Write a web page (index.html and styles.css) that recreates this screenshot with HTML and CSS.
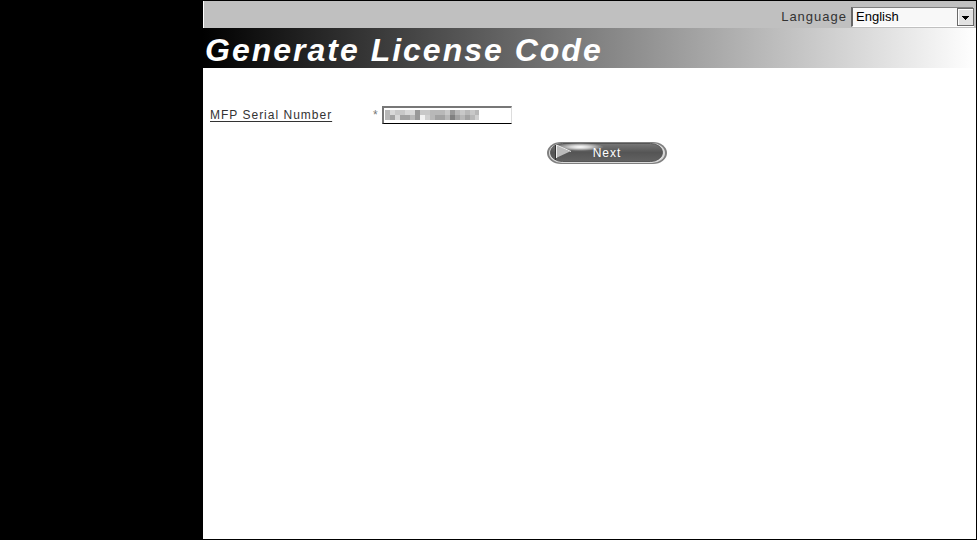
FILE: index.html
```html
<!DOCTYPE html>
<html lang="en">
<head>
  <meta charset="UTF-8">
  <meta name="viewport" content="width=device-width, initial-scale=1.0">
  <title>Generate License Code</title>
  <link rel="stylesheet" href="styles.css">
</head>
<body>
  <div class="page">
    <div class="sidebar"></div>

    <main class="content">
      <div class="top-bar">
        <label for="language">Language</label>
        <div class="select-box">
          <select id="language">
            <option selected>English</option>
          </select>
          <svg class="arrow" width="17" height="18" viewBox="0 0 17 18" shape-rendering="crispEdges" aria-hidden="true">
            <rect width="17" height="18" fill="#6a6a6a"/>
            <rect x="1" y="1" width="15" height="16" fill="#fff"/>
            <rect x="2" y="2" width="14" height="15" fill="#e2e2e2"/>
            <path d="M5 8h7v1h-1v1h-1v1h-1v1h-1v-1h-1v-1h-1v-1h-1z" fill="#000"/>
          </svg>
        </div>
      </div>

      <h1 class="title">Generate License Code</h1>

      <form class="license-form">
        <div class="row">
          <label class="serial-label" for="serial">MFP Serial Number</label>
          <span class="required">*</span>
          <div class="serial-box">
            <input type="text" id="serial">
            <!-- masked serial number -->
            <svg class="mask" width="94" height="10" viewBox="0 0 94 10" shape-rendering="crispEdges" aria-hidden="true">
              <rect width="94" height="10" fill="#b8b8b8"/>
              <path d="M5 0h5v5h-5zM20 0h10v5h-10zM10 5h5v5h-5z" fill="#d8d8d8"/>
              <path d="M10 0h10v5h-10zM35 0h10v5h-10zM60 0h5v5h-5zM75 0h5v5h-5zM85 0h5v5h-5z" fill="#c8c8c8"/>
              <path d="M35 5h5v5h-5z" fill="#f2f2f2"/>
              <path d="M40 5h5v5h-5zM90 5h4v5h-4z" fill="#d0d0d0"/>
              <path d="M5 5h5v5h-5zM15 5h10v5h-10zM50 5h10v5h-10zM70 5h5v5h-5zM80 5h5v5h-5z" fill="#a2a2a2"/>
              <path d="M30 0h5v10h-5zM65 0h5v5h-5z" fill="#989898"/>
              <path d="M65 5h5v5h-5z" fill="#808080"/>
            </svg>
          </div>
        </div>

        <button type="button" class="next">
          <svg class="next-bg" width="120" height="22" viewBox="0 0 120 22" aria-hidden="true">
            <defs>
              <linearGradient id="face" x1="0" y1="0" x2="0" y2="1">
                <stop offset="0" stop-color="#777"/>
                <stop offset="0.5" stop-color="#555"/>
                <stop offset="1" stop-color="#626262"/>
              </linearGradient>
              <radialGradient id="shine">
                <stop offset="0" stop-color="#fff"/>
                <stop offset="0.4" stop-color="#fff" stop-opacity="0.7"/>
                <stop offset="1" stop-color="#fff" stop-opacity="0"/>
              </radialGradient>
            </defs>
            <rect width="120" height="22" rx="14" ry="11" fill="#808080"/>
            <rect x="2" y="1" width="116" height="20" rx="13" ry="10" fill="#d8d8d8"/>
            <rect x="3.500" y="1.500" width="112" height="18" rx="12" ry="9" fill="url(#face)" stroke="#555"/>
            <ellipse cx="33" cy="5" rx="24" ry="4" fill="url(#shine)"/>
            <path d="M8.500 3v15" stroke="#333"/>
            <path d="M9 3L23 9.500L9 16Z" fill="#bbb"/>
            <path d="M9.500 16V3L24 9.500" fill="none" stroke="#eee"/>
          </svg>
          <span class="next-text">Next</span>
        </button>
      </form>
    </main>
  </div>
</body>
</html>
```
FILE: styles.css
```css
* {
  box-sizing: border-box;
}

body {
  margin: 0;
  font-family: 'Liberation Sans', Arial, sans-serif;
  font-size: 12px;
  line-height: 16px;
  letter-spacing: 1px;
  background-color: #fff;
  color: #333;
}

.page {
  display: flex;
  min-height: 100vh;
  border: 1px solid #000;
}

.sidebar {
  flex: 0 0 202px;
  background-color: #000;
}

.content {
  flex: 1;
}

.top-bar {
  display: flex;
  justify-content: flex-end;
  align-items: center;
  gap: 4px;
  height: 27px;
  padding: 5px 2px 0 0;
  border-left: 1px solid #fff;
  background-color: #c0c0c0;
  font-size: 13px;
}

.select-box {
  position: relative;
  width: 123px;
  height: 20px;
}

select {
  appearance: none;
  width: 100%;
  height: 100%;
  padding: 0 20px 0 3px;
  border: 1px solid #808080;
  border-left: 2px solid #666;
  border-bottom-color: #fff;
  border-right-color: #fff;
  border-radius: 0;
  background-color: #f8f8f8;
  font: inherit;
  letter-spacing: 0;
  color: #000;
}

.arrow {
  position: absolute;
  top: 1px;
  right: 0;
  pointer-events: none;
}

.title {
  margin: 0;
  padding: 4px 2px 0;
  background: linear-gradient(to right, #000, #fff);
  color: #fff;
  font-size: 32px;
  font-style: italic;
  line-height: 36px;
  letter-spacing: 2px;
}

.license-form {
  padding: 38px 7px;
}

.row {
  display: flex;
  align-items: center;
}

.serial-label {
  width: 163px;
  line-height: 18px;
  text-decoration: underline;
  text-underline-offset: 2px;
}

.required {
  width: 9px;
  color: #777;
}

.serial-box {
  position: relative;
  height: 18px;
}

.serial-box input {
  display: block;
  width: 130px;
  height: 18px;
  padding: 0 2px;
  border: solid;
  border-width: 2px 1px 1px 2px;
  border-color: #777 #ddd #000 #777;
  background-color: #fff;
  font: inherit;
}

.mask {
  position: absolute;
  top: 4px;
  left: 3px;
}

.next {
  display: block;
  position: relative;
  width: 120px;
  height: 22px;
  margin: 18px auto 0 337px;
  padding: 0;
  border: 0;
  background: none;
  font: inherit;
  letter-spacing: 1px;
  color: #fff;
}

.next-bg {
  position: absolute;
  top: 0;
  left: 0;
}

.next-text {
  position: relative;
}
```
